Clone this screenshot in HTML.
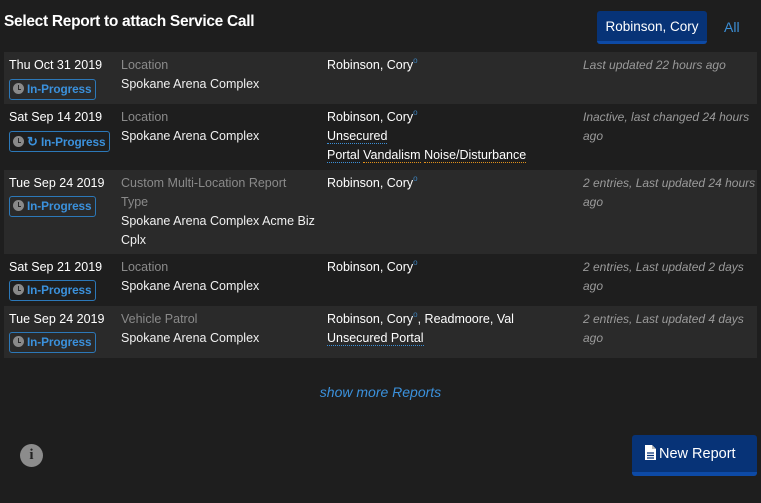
<!DOCTYPE html>
<html><head><meta charset="utf-8"><style>
*{margin:0;padding:0;box-sizing:border-box}
body{width:761px;height:503px;background:#1e1e1e;font-family:"Liberation Sans",sans-serif;color:#f0f0f0;position:relative;overflow:hidden;font-size:12.5px}
h1{position:absolute;left:4px;top:13px;font-size:15.5px;font-weight:bold;color:#fff;letter-spacing:-0.3px}
.tab{position:absolute;left:597px;top:11px;width:110px;height:33px;background:#073377;border-radius:3px;border-bottom:3px solid #0d4aa6;color:#fff;font-size:13.5px;text-align:center;line-height:31px}
.all{position:absolute;left:724px;top:19px;color:#3b8fd6;font-size:14px}
.row{position:absolute;left:4px;width:753px}
.row.l{background:#2a2a2a}
.c{position:absolute;line-height:19px;top:4px}
.d{left:5px;color:#fff}
.t{left:117px;width:198px}
.g{color:#8a8a8a}
.p{left:323px;color:#fff}
.s{left:579px;width:178px;color:#9a9a9a;font-style:italic;font-size:12px}
.b{position:absolute;left:5px;height:21px;border:1px solid #2c78b8;border-radius:3px;color:#3b91dc;font-weight:bold;font-size:11.8px;line-height:19px;padding:0 4px 0 3px;white-space:nowrap;letter-spacing:-0.1px}
.ic{display:inline-block;width:11px;height:11px;border-radius:50%;background:#8a8a8a;vertical-align:-1px;margin-right:3px;position:relative}
.ic:after{content:"";position:absolute;left:5px;top:2px;width:2px;height:4px;border-left:1.5px solid #2a2a2a;border-bottom:1.5px solid #2a2a2a}
sup{color:#3b7fb8;font-size:8px;line-height:0;position:relative;top:-1px}
.u1{border-bottom:1px dotted #3b8fd6}
.u2{border-bottom:1px dotted #e0901a}
.more{position:absolute;left:0;width:761px;top:384px;text-align:center;color:#3b91dc;font-style:italic;font-size:14px}
.info{position:absolute;left:20px;top:444px;width:23px;height:23px;border-radius:50%;background:#8c8c8c;color:#222;font-weight:bold;font-size:15px;text-align:center;line-height:23px;font-family:"Liberation Serif",serif}
.nr{position:absolute;left:632px;top:435px;width:125px;height:41px;background:#073377;border-radius:3px;border-bottom:4px solid #0d4aa6;color:#fff;font-size:14.5px;line-height:38px;padding-left:13px}
</style></head><body>
<h1>Select Report to attach Service Call</h1>
<div class="tab">Robinson, Cory</div>
<div class="all">All</div>

<div class="row l" style="top:52px;height:52px">
<div class="c d">Thu Oct 31 2019</div>
<div class="b" style="top:27px"><span class="ic"></span>In-Progress</div>
<div class="c t"><span class="g">Location</span><br>Spokane Arena Complex</div>
<div class="c p">Robinson, Cory<sup>o</sup></div>
<div class="c s">Last updated 22 hours ago</div>
</div>

<div class="row" style="top:104px;height:66px">
<div class="c d">Sat Sep 14 2019</div>
<div class="b" style="top:27px"><span class="ic"></span><span style="font-size:13px">↻</span> In-Progress</div>
<div class="c t"><span class="g">Location</span><br>Spokane Arena Complex</div>
<div class="c p">Robinson, Cory<sup>o</sup><br><span class="u1">Unsecured</span><br><span class="u1">Portal</span> <span class="u2">Vandalism</span> <span class="u2">Noise/Disturbance</span></div>
<div class="c s">Inactive, last changed 24 hours ago</div>
</div>

<div class="row l" style="top:170px;height:84px">
<div class="c d">Tue Sep 24 2019</div>
<div class="b" style="top:26px"><span class="ic"></span>In-Progress</div>
<div class="c t"><span class="g">Custom Multi-Location Report<br>Type</span><br>Spokane Arena Complex Acme Biz Cplx</div>
<div class="c p">Robinson, Cory<sup>o</sup></div>
<div class="c s">2 entries, Last updated 24 hours ago</div>
</div>

<div class="row" style="top:254px;height:52px">
<div class="c d">Sat Sep 21 2019</div>
<div class="b" style="top:26px"><span class="ic"></span>In-Progress</div>
<div class="c t"><span class="g">Location</span><br>Spokane Arena Complex</div>
<div class="c p">Robinson, Cory<sup>o</sup></div>
<div class="c s">2 entries, Last updated 2 days ago</div>
</div>

<div class="row l" style="top:306px;height:52px">
<div class="c d">Tue Sep 24 2019</div>
<div class="b" style="top:26px"><span class="ic"></span>In-Progress</div>
<div class="c t"><span class="g">Vehicle Patrol</span><br>Spokane Arena Complex</div>
<div class="c p">Robinson, Cory<sup>o</sup>, Readmoore, Val<br><span class="u1">Unsecured Portal</span></div>
<div class="c s">2 entries, Last updated 4 days ago</div>
</div>

<div class="more">show more Reports</div>
<div class="info">i</div>
<div class="nr"><svg width="11" height="15" viewBox="0 0 11 15" style="vertical-align:-2px;margin-right:3px"><path d="M0 0H7L11 4V15H0Z" fill="#fff"/><path d="M7 0V4H11" fill="#bbb"/><path d="M2 8H9M2 10.5H9M2 13H9" stroke="#073377" stroke-width="1.2"/></svg>New Report</div>
</body></html>
